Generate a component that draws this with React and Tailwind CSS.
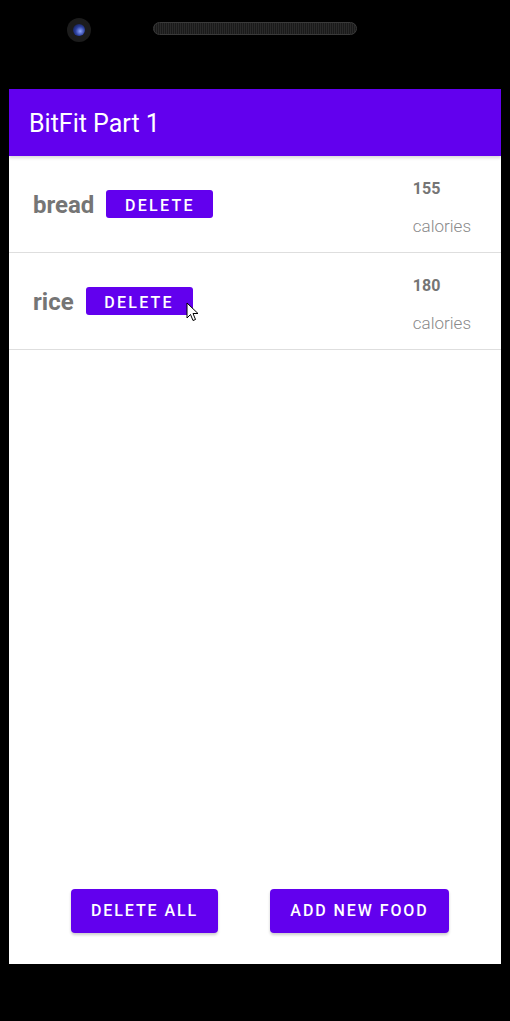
import React from 'react';

const foods = [
  { name: 'bread', calories: 155 },
  { name: 'rice', calories: 180 },
];

function Cursor() {
  return (
    <svg width="14" height="20" viewBox="0 0 14 20" className="absolute left-[100px] top-[15px]">
      <path d="M1 1 L1 16 L4.5 12.5 L7 18.5 L9.5 17.5 L7 11.5 L12 11.5 Z" fill="#fff" stroke="#000" strokeWidth="1" strokeLinejoin="round" />
    </svg>
  );
}

export default function App() {
  return (
    <div className="w-[510px] h-[1021px] bg-black flex flex-col" style={{ fontFamily: 'Roboto, "Liberation Sans", sans-serif' }}>
      {/* Top bezel */}
      <div className="h-[89px] flex items-start pt-[18px] pl-[67px]">
        <div className="w-[24px] h-[24px] rounded-full bg-[#1c1c1c] flex items-center justify-center">
          <div className="w-[12px] h-[12px] rounded-full bg-[radial-gradient(circle_at_60%_60%,#8fa6ff_0%,#2b3f9e_45%,#0a0f2a_100%)]" />
        </div>
        <div className="ml-[62px] mt-[4px] w-[204px] h-[13px] rounded-full bg-[repeating-linear-gradient(90deg,#2a2a2a_0px,#2a2a2a_1px,#1a1a1a_1px,#1a1a1a_2px)] border border-[#3a3a3a]" />
      </div>

      {/* Screen */}
      <div className="mx-[9px] h-[875px] bg-white flex flex-col">
        <div className="h-[67px] bg-[#6200ee] flex items-center px-[20px] shadow-[0_2px_3px_rgba(0,0,0,0.15)]">
          <span className="text-white text-[25px] leading-none mt-[2px]">BitFit Part 1</span>
        </div>

        <div className="flex flex-col">
          {foods.map((f, i) => (
            <div key={f.name} className="h-[97px] border-b border-[#dedede] flex items-start pl-[24px] pr-[30px]">
              <div className="flex items-center h-full">
                <span className="text-[#757575] font-bold text-[24px] leading-none mt-[2px]">{f.name}</span>
                <div className="relative ml-[12px]">
                  <button className="w-[107px] h-[28px] rounded-[3px] bg-[#6200ee] text-white text-[16px] font-medium tracking-[0.14em] flex items-center justify-center pt-[4px]">
                    DELETE
                  </button>
                  {i === 1 && <Cursor />}
                </div>
              </div>
              <div className="ml-auto flex flex-col pt-[25px]">
                <span className="text-[#757575] font-bold text-[16px] leading-none">{f.calories}</span>
                <span className="text-[#8a8a8a] font-light text-[17px] leading-none mt-[21px]">calories</span>
              </div>
            </div>
          ))}
        </div>

        <div className="flex-1" />

        <div className="flex justify-center gap-[52px] pl-[10px] pb-[31px]">
          <button className="w-[147px] h-[44px] rounded-[4px] bg-[#6200ee] text-white text-[16px] font-medium tracking-[0.12em] shadow-[0_2px_3px_rgba(0,0,0,0.2)]">
            DELETE ALL
          </button>
          <button className="w-[179px] h-[44px] rounded-[4px] bg-[#6200ee] text-white text-[16px] font-medium tracking-[0.12em] shadow-[0_2px_3px_rgba(0,0,0,0.2)]">
            ADD NEW FOOD
          </button>
        </div>
      </div>
    </div>
  );
}
